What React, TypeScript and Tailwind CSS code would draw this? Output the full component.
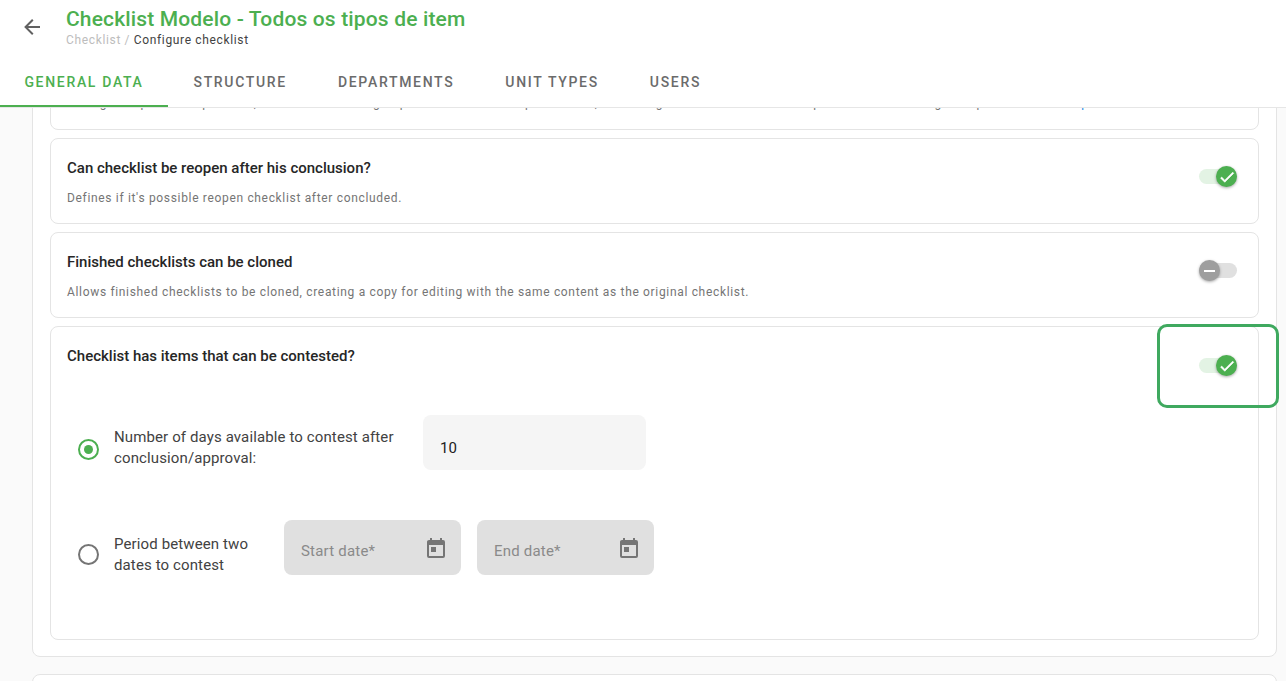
const F = "font-['Roboto',sans-serif]";

function Toggle({ on }: { on: boolean }) {
  return (
    <div className="relative w-[38px] h-[15px] shrink-0">
      <div className={`w-full h-full rounded-full ${on ? "bg-[#e3f3e4]" : "bg-[#e0e0e0]"}`} />
      <div
        className={`absolute top-[-3px] w-[21px] h-[21px] rounded-full flex items-center justify-center shadow-[0_1px_3px_rgba(0,0,0,0.35)] ${
          on ? "right-0 bg-[#4caf50]" : "left-0 bg-[#9e9e9e]"
        }`}
      >
        {on ? (
          <svg viewBox="0 0 24 24" className="w-[18px] h-[18px]" fill="#fff" stroke="#fff" strokeWidth="0.8">
            <path d="M21 7 9 19l-5.5-5.5 1.41-1.41L9 16.17 19.59 5.59 21 7z" />
          </svg>
        ) : (
          <div className="w-[11px] h-[2px] bg-white" />
        )}
      </div>
    </div>
  );
}

function Calendar() {
  return (
    <svg viewBox="0 0 24 24" className="w-[24px] h-[24px] mt-[2px]" fill="#757575">
      <path d="M7 10h5v5H7m12 4H5V8h14m0-5h-1V1h-2v2H8V1H6v2H5c-1.11 0-2 .89-2 2v14a2 2 0 002 2h14a2 2 0 002-2V5a2 2 0 00-2-2z" />
    </svg>
  );
}

function DateField({ label }: { label: string }) {
  return (
    <div className="w-[177px] h-[55px] bg-[#e0e0e0] rounded-lg flex items-center justify-between pl-[17px] pr-[13px] shrink-0">
      <span className="text-[15px] text-[#8a8a8a] tracking-[0.2px] mt-[7px]">{label}</span>
      <Calendar />
    </div>
  );
}

function Card({ title, desc, on }: { title: string; desc: string; on: boolean }) {
  return (
    <div className="h-[86px] border border-[#e4e4e4] rounded-lg bg-white pl-[16px] pr-[21px] flex items-center justify-between">
      <div className="mt-[1px]">
        <div className="text-[15px] font-medium text-[#262626] leading-[20px]">{title}</div>
        <div className="text-[12px] text-[#757575] tracking-[0.67px] leading-[16px] mt-[12px]">{desc}</div>
      </div>
      <div className="mt-[-9px]">
        <Toggle on={on} />
      </div>
    </div>
  );
}

export default function App() {
  const tabs = ["STRUCTURE", "DEPARTMENTS", "UNIT TYPES", "USERS"];
  return (
    <div className={`${F} relative w-[1286px] h-[681px] overflow-hidden bg-[#fafafa] flex flex-col`}>
      <header className="relative z-10 h-[108px] shrink-0 bg-white border-b border-[#e6e6e6]">
        <div className="flex h-[60px]">
          <svg viewBox="0 0 24 24" className="w-[24px] h-[24px] ml-[20px] mt-[15px]" fill="#616161">
            <path d="M20 11v2H8l5.5 5.5-1.42 1.42L4.16 12l7.92-7.92L13.5 5.5 8 11h12z" />
          </svg>
          <div className="ml-[22px] mt-[6px]">
            <div className="text-[21px] tracking-[0.15px] font-medium text-[#4caf50] leading-[27px]">Checklist Modelo - Todos os tipos de item</div>
            <div className="text-[12px] leading-[15px] tracking-[0.65px] text-[#bdbdbd]">
              Checklist / <span className="text-[#424242]">Configure checklist</span>
            </div>
          </div>
        </div>
        <div className="flex h-[47px] text-[14px] font-medium tracking-[1.68px]">
          <div className="w-[168px] text-center text-[#4caf50] border-b-2 border-[#4caf50] pt-[4px] leading-[36px]">GENERAL DATA</div>
          {tabs.map((t) => (
            <div key={t} className="px-[25.5px] first-of-type:ml-[1px] text-[#6b6b6b] pt-[4px] leading-[36px]">{t}</div>
          ))}
        </div>
      </header>

      <main className="flex-1 min-h-0 overflow-hidden pl-[32px] pr-[9px]">
        <div className="mt-[-38px] border border-[#e4e4e4] rounded-lg bg-white pl-[17px] pr-[17px] pt-[8px] pb-[16px] flex flex-col gap-[8px]">
          <div className="h-[51px] border border-[#e4e4e4] rounded-lg bg-white pl-[16px] pr-[20px] pt-[15px] text-[12px] text-[#757575] tracking-[0.67px] leading-[16px] whitespace-nowrap overflow-hidden">
            Manage the points for personal, when the item is a group and the same item points in all, and also go to the item that is on a point of the item on gather points from each <span className="text-[#1e88e5]">point</span>
          </div>
          <Card title="Can checklist be reopen after his conclusion?" desc="Defines if it's possible reopen checklist after concluded." on />
          <Card title="Finished checklists can be cloned" desc="Allows finished checklists to be cloned, creating a copy for editing with the same content as the original checklist." on={false} />

          <div className="h-[314px] border border-[#e4e4e4] rounded-lg bg-white pl-[16px] pr-[21px] pt-[19px]">
            <div className="flex justify-between items-start">
              <div className="text-[15px] font-medium text-[#262626] leading-[20px]">Checklist has items that can be contested?</div>
              <div className="mt-[12px]"><Toggle on /></div>
            </div>

            <div className="flex items-center ml-[11px] mt-[42px] h-[55px]">
              <div className="w-[21px] h-[21px] rounded-full border-2 border-[#4caf50] flex items-center justify-center shrink-0 mt-[13px]">
                <div className="w-[9px] h-[9px] rounded-full bg-[#4caf50]" />
              </div>
              <div className="w-[309px] ml-[15px] text-[15px] tracking-[0.12px] leading-[21px] text-[#424242] shrink-0 mt-[10px]">
                Number of days available to contest after conclusion/approval:
              </div>
              <div className="w-[223px] h-[55px] bg-[#f5f5f5] rounded-lg flex items-center pl-[17px] text-[15px] text-[#212121]">
                <span className="mt-[11px]">10</span>
              </div>
            </div>

            <div className="flex items-center ml-[11px] mt-[50px] h-[55px]">
              <div className="w-[21px] h-[21px] rounded-full border-2 border-[#757575] shrink-0 mt-[13px]" />
              <div className="w-[170px] ml-[15px] pr-[20px] text-[15px] tracking-[0.12px] leading-[21px] text-[#424242] shrink-0 mt-[14px]">
                Period between two dates to contest
              </div>
              <div className="flex gap-[16px]">
                <DateField label="Start date*" />
                <DateField label="End date*" />
              </div>
            </div>
          </div>
        </div>
        <div className="mt-[17px] h-[40px] border border-[#e4e4e4] rounded-lg bg-white" />
      </main>

      <div className="absolute left-[1157px] top-[324px] w-[122px] h-[84px] rounded-[10px] border-[3px] border-[#3fa95f] z-20" />
    </div>
  );
}
